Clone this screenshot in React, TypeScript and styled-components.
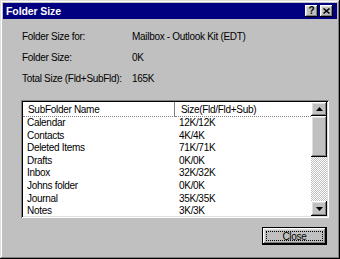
import React from "react";
import styled, { createGlobalStyle } from "styled-components";

const Global = createGlobalStyle`
  html, body { margin: 0; padding: 0; background: #c0c0c0; }
  body { font-family: "Liberation Sans", Arial, sans-serif; }
  * { box-sizing: border-box; }
`;

const raised = `
  box-shadow: inset -1px -1px #000, inset 1px 1px #fff,
    inset -2px -2px #808080, inset 2px 2px #dfdfdf;
`;

const Window = styled.div`
  width: 340px;
  height: 259px;
  background: #c0c0c0;
  padding: 3px;
  display: flex;
  flex-direction: column;
  box-shadow: inset -1px -1px #000, inset 1px 1px #dfdfdf,
    inset -2px -2px #808080, inset 2px 2px #fff;
`;

const TitleBar = styled.div`
  height: 16px;
  background: #000080;
  display: flex;
  align-items: center;
  padding: 0 4px 0 3px;
`;

const Title = styled.div`
  flex: 1;
  color: #fff;
  font-weight: bold;
  font-size: 10.5px;
  letter-spacing: -0.1px;
  line-height: 16px;
`;

const CaptionButtons = styled.div`
  display: flex;
  gap: 2px;
`;

const CaptionButton = styled.div`
  width: 13px;
  height: 12px;
  background: #c0c0c0;
  ${raised}
  display: flex;
  align-items: center;
  justify-content: center;
  font-size: 10px;
  font-weight: bold;
  color: #000;
  line-height: 12px;
`;

const Body = styled.div`
  flex: 1;
  display: flex;
  flex-direction: column;
  padding: 7px 8px 11px 18px;
  font-size: 10px;
  letter-spacing: -0.3px;
  color: #000;
`;

const Info = styled.div`
  display: grid;
  grid-template-columns: 110px 1fr;
  grid-auto-rows: 21px;
  align-items: center;
  padding-left: 1px;
  margin-bottom: 11px;
`;

const ListBox = styled.div`
  height: 118px;
  background: #fff;
  padding: 2px;
  display: flex;
  box-shadow: inset 1px 1px #808080, inset -1px -1px #fff,
    inset 2px 2px #000, inset -2px -2px #dfdfdf;
`;

const ListContent = styled.div`
  flex: 1;
  overflow: hidden;
  display: grid;
  grid-template-columns: 152px 1fr;
  grid-template-rows: 15px;
  grid-auto-rows: 12.6px;
  align-items: center;
`;

const HeaderCell = styled.div<{ $last?: boolean }>`
  height: 15px;
  line-height: 15px;
  padding-left: ${(p) => (p.$last ? 6 : 5)}px;
  border-bottom: 1px dotted #808080;
  border-right: ${(p) => (p.$last ? "none" : "1px solid #808080")};
  white-space: nowrap;
`;

const Cell = styled.div<{ $col: number }>`
  padding-left: ${(p) => (p.$col === 0 ? 4 : 4)}px;
  line-height: 12.6px;
  white-space: nowrap;
`;

const ScrollBar = styled.div`
  width: 16px;
  display: flex;
  flex-direction: column;
`;

const ScrollButton = styled.div<{ $h: number }>`
  height: ${(p) => p.$h}px;
  background: #c0c0c0;
  ${raised}
  display: flex;
  align-items: center;
  justify-content: center;
`;

const Track = styled.div`
  flex: 1;
  background: repeating-conic-gradient(#c0c0c0 0 25%, #fff 0 50%) 0 0 / 2px 2px;
`;

const Footer = styled.div`
  display: flex;
  justify-content: flex-end;
  padding: 9px 2px 0 0;
`;

const CloseButton = styled.div`
  width: 65px;
  height: 18px;
  border: 1px solid #000;
  background: #c0c0c0;
  ${raised}
  padding: 3px;
  display: flex;
`;

const Focus = styled.div`
  flex: 1;
  border: 1px dotted #000;
  display: flex;
  align-items: center;
  justify-content: center;
  font-size: 10px;
`;

const rows: [string, string][] = [
  ["Calendar", "12K/12K"],
  ["Contacts", "4K/4K"],
  ["Deleted Items", "71K/71K"],
  ["Drafts", "0K/0K"],
  ["Inbox", "32K/32K"],
  ["Johns folder", "0K/0K"],
  ["Journal", "35K/35K"],
  ["Notes", "3K/3K"],
];

const Arrow = ({ up }: { up?: boolean }) => (
  <svg width="7" height="4" viewBox="0 0 7 4">
    <polygon points={up ? "3.5,0 7,4 0,4" : "0,0 7,0 3.5,4"} fill="#000" />
  </svg>
);

export default function App() {
  return (
    <>
      <Global />
      <Window>
        <TitleBar>
          <Title>Folder Size</Title>
          <CaptionButtons>
            <CaptionButton>?</CaptionButton>
            <CaptionButton>
              <svg width="7" height="6" viewBox="0 0 7 6">
                <path d="M0.5 0.5 L6.5 5.5 M6.5 0.5 L0.5 5.5" stroke="#000" strokeWidth="1.5" />
              </svg>
            </CaptionButton>
          </CaptionButtons>
        </TitleBar>
        <Body>
          <Info>
            <span>Folder Size for:</span>
            <span>Mailbox - Outlook Kit (EDT)</span>
            <span>Folder Size:</span>
            <span>0K</span>
            <span>Total Size (Fld+SubFld):</span>
            <span>165K</span>
          </Info>
          <ListBox>
            <ListContent>
              <HeaderCell>SubFolder Name</HeaderCell>
              <HeaderCell $last>Size(Fld/Fld+Sub)</HeaderCell>
              {rows.map(([n, s]) => (
                <React.Fragment key={n}>
                  <Cell $col={0}>{n}</Cell>
                  <Cell $col={1}>{s}</Cell>
                </React.Fragment>
              ))}
            </ListContent>
            <ScrollBar>
              <ScrollButton $h={14}>
                <Arrow up />
              </ScrollButton>
              <ScrollButton $h={41} />
              <Track />
              <ScrollButton $h={15}>
                <Arrow />
              </ScrollButton>
            </ScrollBar>
          </ListBox>
          <Footer>
            <CloseButton>
              <Focus>Close</Focus>
            </CloseButton>
          </Footer>
        </Body>
      </Window>
    </>
  );
}
